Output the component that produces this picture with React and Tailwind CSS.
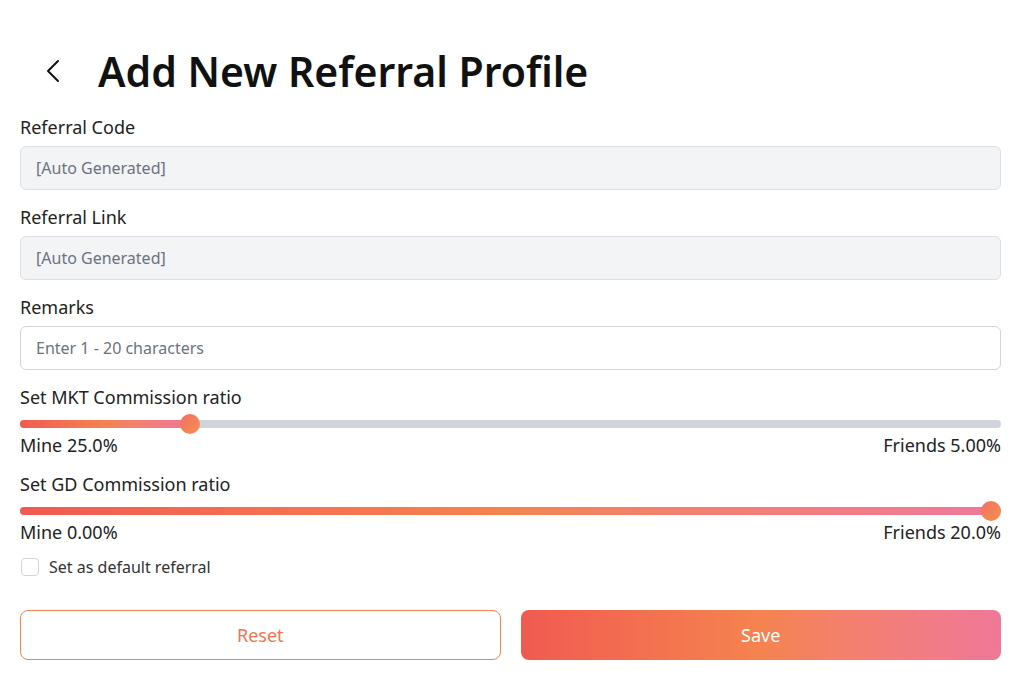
import React, { useState } from "react";

const font = { fontFamily: '"Noto Sans", "Open Sans", sans-serif' };

function Ratio({ label, mine, friends, total }) {
  const p = friends / total;
  return (
    <div className="mt-[15px]">
      <div className="text-[18px] leading-[24px] text-[#222]">{label}</div>
      <div className="relative h-[20px] mt-[5px]">
        <div className="absolute left-0 right-0 top-[6px] h-[8px] rounded-full bg-[#d1d5db]" />
        <div
          className="absolute left-0 top-[6px] h-[8px] rounded-full bg-gradient-to-r from-[#f05a50] via-[#f5834f] to-[#f07898]"
          style={{ width: `calc(${p * 100}% - ${p * 20 - 10}px)` }}
        />
        <div
          className="absolute top-0 w-[20px] h-[20px] rounded-full bg-gradient-to-br from-[#f07060] to-[#f5904f]"
          style={{ left: `calc(${p * 100}% - ${p * 20}px)` }}
        />
      </div>
      <div className="flex justify-between text-[18px] leading-[24px] text-[#222] -mt-[1px]">
        <span>Mine {mine}</span>
        <span>Friends {friends === 5 ? "5.00" : friends.toFixed(1)}%</span>
      </div>
    </div>
  );
}

export default function App() {
  const [remarks, setRemarks] = useState("");
  const [isDefault, setIsDefault] = useState(false);

  return (
    <div className="min-h-screen bg-white pl-[20px] pr-[23px]" style={font}>
      <div className="flex items-center h-[54px] pt-[44px] box-content">
        <svg width="16" height="24" viewBox="0 0 16 24" className="ml-[25px] text-[#111]">
          <polyline points="13,2 3,12 13,22" fill="none" stroke="currentColor" strokeWidth="2" strokeLinecap="round" strokeLinejoin="round" />
        </svg>
        <h1 className="ml-[37px] text-[41px] leading-[54px] font-semibold text-[#111]">
          Add New Referral Profile
        </h1>
      </div>

      <div className="mt-[17px] text-[18px] leading-[24px] text-[#222]">Referral Code</div>
      <div className="mt-[7px] h-[44px] flex items-center px-[15px] rounded-md border border-[#dcdfe4] bg-[#f3f4f6] text-[16px] text-[#6b7280]">
        [Auto Generated]
      </div>

      <div className="mt-[15px] text-[18px] leading-[24px] text-[#222]">Referral Link</div>
      <div className="mt-[7px] h-[44px] flex items-center px-[15px] rounded-md border border-[#dcdfe4] bg-[#f3f4f6] text-[16px] text-[#6b7280]">
        [Auto Generated]
      </div>

      <div className="mt-[15px] text-[18px] leading-[24px] text-[#222]">Remarks</div>
      <input
        value={remarks}
        onChange={(e) => setRemarks(e.target.value)}
        placeholder="Enter 1 - 20 characters"
        className="mt-[7px] w-full h-[44px] px-[15px] rounded-md border border-[#d1d5db] bg-white text-[16px] text-[#222] placeholder:text-[#6b7280] outline-none"
      />

      <Ratio label="Set MKT Commission ratio" mine="25.0%" friends={5} total={30} />
      <Ratio label="Set GD Commission ratio" mine="0.00%" friends={20} total={20} />

      <label className="mt-[11px] flex items-center gap-[10px] h-[24px] cursor-pointer">
        <input
          type="checkbox"
          checked={isDefault}
          onChange={() => setIsDefault((v) => !v)}
          className="ml-[1px] w-[18px] h-[18px] appearance-none rounded-[4px] border border-[#d1d5db] bg-white"
        />
        <span className="text-[16px] text-[#333]">Set as default referral</span>
      </label>

      <div className="mt-[31px] grid grid-cols-2 gap-[20px]">
        <button className="h-[50px] rounded-lg border border-[#f5834f] bg-white text-[18px] text-[#f5734f]">
          Reset
        </button>
        <button className="h-[50px] rounded-lg bg-gradient-to-r from-[#f05a50] via-[#f5834f] to-[#f07898] text-[18px] text-white">
          Save
        </button>
      </div>
    </div>
  );
}
